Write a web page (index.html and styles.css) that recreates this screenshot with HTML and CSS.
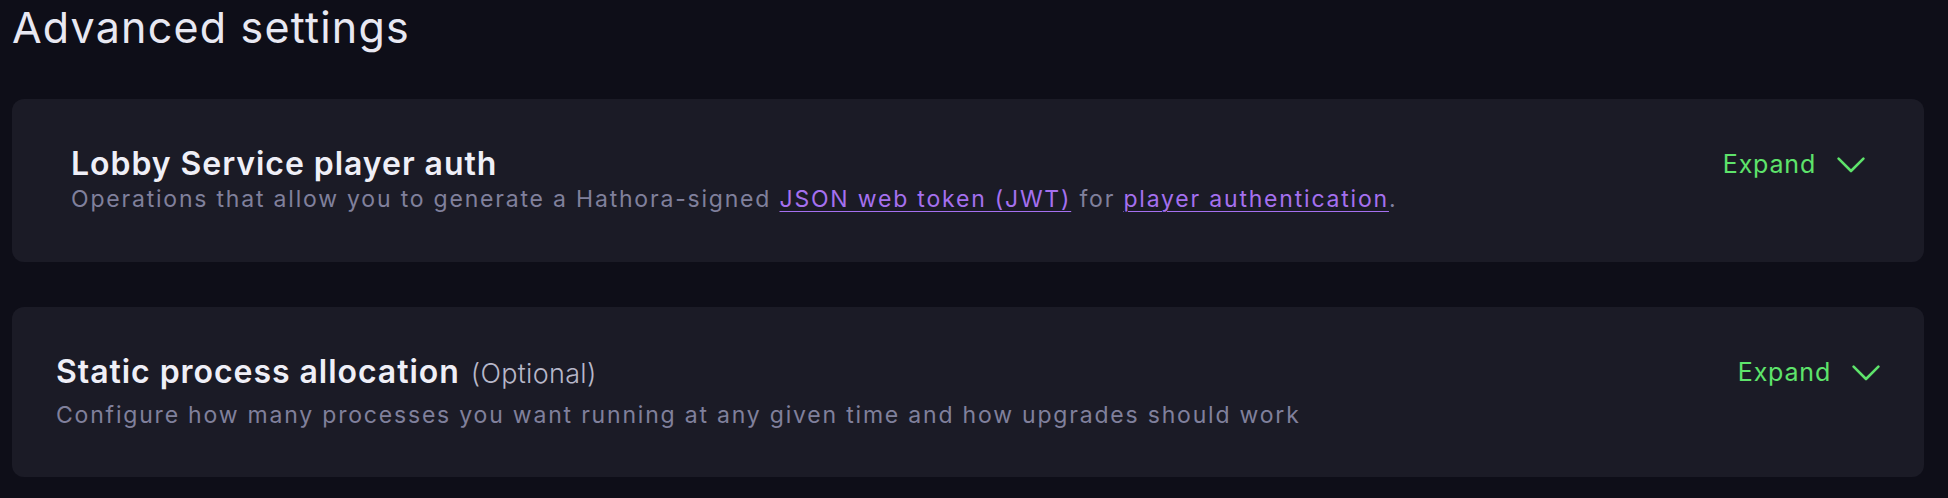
FILE: index.html
```html
<!DOCTYPE html>
<html lang="en">
<head>
<meta charset="utf-8">
<title>Advanced settings</title>
<link rel="stylesheet" href="styles.css">
</head>
<body>
<main class="page">
  <h1 class="page-title">Advanced settings</h1>

  <section class="card card--inset">
    <div class="card-text">
      <h2 class="card-title">Lobby Service player auth</h2>
      <p class="card-desc">Operations that allow you to generate a Hathora-signed <a class="link" href="#">JSON web token (JWT)</a> for <a class="link" href="#">player authentication</a>.</p>
    </div>
    <button class="expand" type="button">
      <span class="expand-label">Expand</span>
      <svg class="chevron" width="28" height="16" viewBox="0 0 28 16" aria-hidden="true"><polyline points="1.6,1.6 14,14 26.4,1.6" fill="none" stroke="currentColor" stroke-width="2.6" stroke-linecap="round" stroke-linejoin="round"/></svg>
    </button>
  </section>

  <section class="card card--plain">
    <div class="card-text">
      <h2 class="card-title card-title--spaced">Static process allocation <span class="optional">(Optional)</span></h2>
      <p class="card-desc">Configure how many processes you want running at any given time and how upgrades should work</p>
    </div>
    <button class="expand" type="button">
      <span class="expand-label">Expand</span>
      <svg class="chevron" width="28" height="16" viewBox="0 0 28 16" aria-hidden="true"><polyline points="1.6,1.6 14,14 26.4,1.6" fill="none" stroke="currentColor" stroke-width="2.6" stroke-linecap="round" stroke-linejoin="round"/></svg>
    </button>
  </section>
</main>
</body>
</html>
```
FILE: styles.css
```css
* { box-sizing: border-box; }

html, body {
  margin: 0;
  background: #0e0e18;
}

body {
  font-family: Inter, "Noto Sans", sans-serif;
  color: #ececf4;
}

.page {
  padding: 1px 24px 0 12px;
}

.page-title {
  margin: 0 0 46px 0;
  font-size: 43px;
  line-height: 52px;
  font-weight: 400;
  letter-spacing: 1.2px;
  color: #e8e8f2;
}

.card {
  display: flex;
  justify-content: space-between;
  align-items: flex-start;
  background: #1b1b26;
  border-radius: 12px;
}

.card--inset {
  padding: 45px 59px 48px 59px;
  margin-bottom: 45px;
}

.card--plain {
  padding: 45px 44px 47px 44px;
}

.card-text {
  display: flex;
  flex-direction: column;
}

.card-title {
  margin: 0;
  font-size: 32px;
  line-height: 40px;
  font-weight: 600;
  letter-spacing: 0.95px;
  color: #efeff7;
}

.card-title--spaced {
  margin-bottom: 6px;
}

.optional {
  margin-left: 2px;
  font-size: 27px;
  font-weight: 300;
  letter-spacing: 0.3px;
  color: #b7b7c9;
}

.card-desc {
  margin: 0;
  font-size: 23px;
  line-height: 30px;
  letter-spacing: 1.8px;
  color: #80809c;
}

.link {
  color: #a570ef;
  text-decoration: underline;
  text-decoration-thickness: 1px;
  text-underline-offset: 4px;
}

.expand {
  display: flex;
  align-items: center;
  gap: 21px;
  margin: 0;
  padding: 0;
  border: 0;
  background: none;
  color: #5ee36b;
  font-family: inherit;
  cursor: pointer;
}

.expand-label {
  font-size: 25px;
  line-height: 40px;
  letter-spacing: 0.8px;
}

.chevron {
  display: block;
  margin-top: 1px;
}
```
